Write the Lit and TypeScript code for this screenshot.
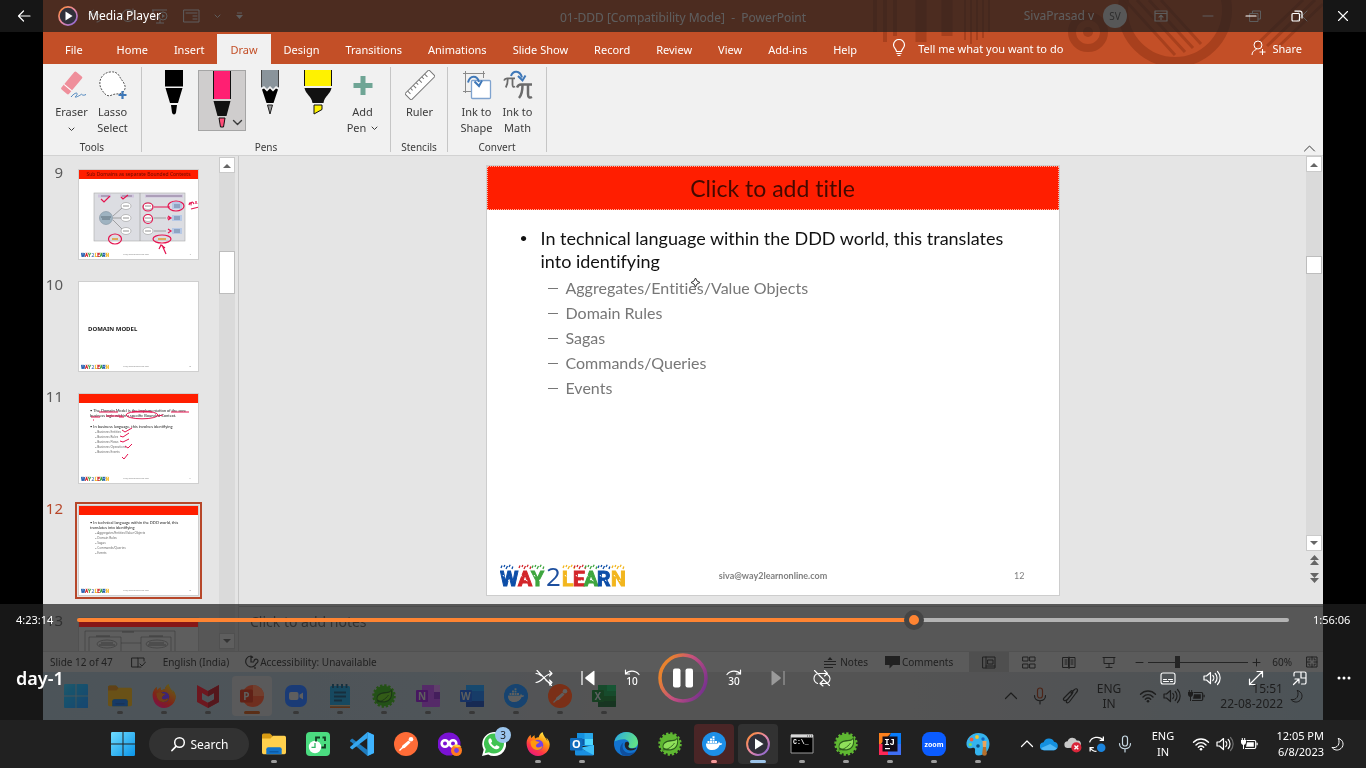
import { LitElement, html, svg, css, type TemplateResult } from "lit";
import { customElement, property, state } from "lit/decorators.js";
import { classMap } from "lit/directives/class-map.js";

type Shape = TemplateResult;

const icon = (w: number, h: number, box: string, body: Shape) =>
  html`<svg width=${w} height=${h} viewBox=${box} fill="none" aria-hidden="true">${body}</svg>`;

/* ---------- application logos, 24 x 24 ---------- */
const apps: Record<string, Shape> = {
  windows: svg`<defs><linearGradient id="win" x1="0" y1="0" x2="1" y2="1"><stop offset="0" stop-color="#6fdcff"/><stop offset="1" stop-color="#0a94e8"/></linearGradient></defs>
    <path fill="url(#win)" d="M0 1.2A1.2 1.2 0 0 1 1.2 0H11.5V11.5H0zM12.5 0H22.8A1.2 1.2 0 0 1 24 1.2V11.5H12.5zM0 12.5H11.5V24H1.2A1.2 1.2 0 0 1 0 22.8zM12.5 12.5H24V22.8A1.2 1.2 0 0 1 22.8 24H12.5z"/>`,
  folder: svg`<path fill="#d89b13" d="M0 3a1.6 1.6 0 0 1 1.6-1.6H8l2.4 2.4V9H0z"/><path fill="#ffd04d" d="M0 6.5h8.5l2.4-2.7h11.5A1.6 1.6 0 0 1 24 5.4v15.2a1.6 1.6 0 0 1-1.6 1.6H1.600A1.600 1.600 0 0 1 0 20.600z"/><path fill="#1273c9" d="M4.300 17.200a2 2 0 0 1 2-2h11.400a2 2 0 0 1 2 2v5H4.300z"/><path fill="#0b5aa5" d="M7.500 19h9v1.500h-9z"/>`,
  firefox: svg`<defs><linearGradient id="ff" x1=".8" y1="0" x2=".2" y2="1"><stop offset="0" stop-color="#fff44f"/><stop offset=".35" stop-color="#ff980e"/><stop offset=".7" stop-color="#ff3647"/><stop offset="1" stop-color="#e31587"/></linearGradient></defs>
    <path fill="url(#ff)" d="M23 9.500c-.6-1.600-1.800-3.200-2.800-3.700.8 1.500 1.200 2.800 1.300 3.600-1.500-3.700-4-5.200-5-9.400-2.700 1.500-3.500 4-3.700 5.200-1.300.1-2.500.5-3.500 1.200C8.500 5.500 8.400 4.200 8.800 3.200 7.300 3.800 6.200 5 5.500 6 4.900 5.500 4.600 3.700 4.700 2.700 3.500 3.500 1.500 6.200.9 8.500-.6 15 3.500 24 12 24c6.800 0 11.700-5.500 11.700-11.400 0-1.100-.3-2.300-.7-3.100z"/>
    <circle cx="12" cy="13" r="5.300" fill="#7542e5"/><path fill="#ff980e" d="M4.500 9.500c2-1.500 4.500-1.400 6-.3 1 .5 2.500.4 3 .6-.3 1.300-2 2-3 2.600-1.300 1-.2 3.300 2 3.200 2-.1 2.500-1.500 4-1.300-1 3-3.500 4-5.500 3.800-4-.3-6.500-3.500-6.500-8.600z"/>`,
  mcafee: svg`<path fill="#c8202f" d="M1 1l11 6L23 1v17l-11 6-11-6zM6 9v6.500l6 3.200 6-3.200V9l-6 3.500z" fill-rule="evenodd"/><path fill="#8f1420" d="M12 7l11-6v17l-11 6v-5.300l6-3.200V9l-6 3.500z"/>`,
  powerpoint: svg`<circle cx="13" cy="12" r="11" fill="#e8694a"/><path fill="#ff9a7a" d="M13 1a11 11 0 0 1 11 11H13z"/><rect y="5.500" width="13" height="13" rx="1.500" fill="#b83a1c"/><text x="3.300" y="15.600" font-family="Noto Sans" font-weight="700" font-size="10" fill="#fff">P</text>`,
  camera: svg`<rect x="1" y="1" width="22" height="22" rx="7" fill="#3b7cf0"/><rect x="5" y="8" width="9.500" height="8" rx="2" fill="#fff"/><path fill="#fff" d="M15.500 10.800L19 8.500v7l-3.500-2.300z"/>`,
  notepad: svg`<rect x="2" y="2" width="20" height="22" rx="1.500" fill="#2ba3cf"/><path stroke="#0b4a68" stroke-width="1.800" d="M5 0v4M9.500 0v4M14 0v4M18.500 0v4M6 8.500h12M6 12.500h12M6 16.500h8"/><path fill="#f2d9b8" d="M2 21h20v1.500H2z"/><path fill="#bd6b2c" d="M2 22.500h20V24H2z"/>`,
  spring: svg`<circle cx="12" cy="12" r="10.200" fill="#5fb832" stroke="#5fb832" stroke-width="3" stroke-dasharray="2.200 1.800"/><path fill="#2c5e1c" d="M5 17C3 10 9 8 14 8c3 0 4.500-1 5.500-3 2 8-1 13-7 13.500-3 .3-5 0-7.500-1.500z"/><path fill="#8fe05a" d="M5.500 15.500C5 11 10 9.500 14 9.300c2.500-.1 4-.8 5-2 .8 6-2 9.500-6.500 9.900-3 .2-4.500-.4-7-1.700z"/><path stroke="#2c5e1c" stroke-width=".9" d="M4.500 18c4 0 9-2.500 12-7"/>`,
  onenote: svg`<path fill="#b15bd6" d="M6 1h17a1 1 0 0 1 1 1v20a1 1 0 0 1-1 1H6z"/><path fill="#7a2fa8" d="M18 8h6v7h-6z"/><path fill="#e0a0f5" d="M18 1h5a1 1 0 0 1 1 1v6h-6z"/><rect y="6" width="12" height="12" rx="1" fill="#7719aa"/><text x="2" y="15.500" font-family="Noto Sans" font-weight="700" font-size="10" fill="#fff">N</text>`,
  word: svg`<path fill="#2b7cd3" d="M6 1h17a1 1 0 0 1 1 1v20a1 1 0 0 1-1 1H6z"/><path fill="#41a5ee" d="M6 1h17a1 1 0 0 1 1 1v5H6z"/><path fill="#103f91" d="M6 17h18v5a1 1 0 0 1-1 1H6z"/><rect y="6" width="12" height="12" rx="1" fill="#185abd"/><text x=".9" y="15.500" font-family="Noto Sans" font-weight="700" font-size="10" fill="#fff">W</text>`,
  excel: svg`<path fill="#21a366" d="M6 1h17a1 1 0 0 1 1 1v20a1 1 0 0 1-1 1H6z"/><path fill="#33c481" d="M15 1h8a1 1 0 0 1 1 1v5h-9z"/><path fill="#107c41" d="M6 12h18v5H6z"/><path fill="#185c37" d="M6 17h18v5a1 1 0 0 1-1 1H6z"/><rect y="6" width="12" height="12" rx="1" fill="#107c41"/><text x="2.500" y="15.500" font-family="Noto Sans" font-weight="700" font-size="10" fill="#fff">X</text>`,
  docker: svg`<circle cx="12" cy="12" r="12" fill="#1d8fe8"/><path fill="#fff" d="M4 11.500h11.500c1-.1 1.200-1 1-2 .8.300 1.300 1 1.400 1.800.8-.2 1.700-.1 2.300.4-.5 1-1.400 1.400-2.500 1.400-1.200 3.500-4 4.900-7.400 4.900-4 0-6.500-1.900-6.300-6.500z"/><path fill="#fff" d="M5.500 9h2v2h-2zM8 9h2v2H8zM10.500 9h2v2h-2zM13 9h2v2h-2zM8 6.500h2v2H8zM10.500 6.500h2v2h-2zM10.500 4.200h2v1.900h-2z"/>`,
  postman: svg`<circle cx="12" cy="12" r="12" fill="#ff6c37"/><path fill="#fff" d="M14.500 8.500l2 2-5.800 5.600-3 .5.500-2.800z"/><circle cx="17" cy="7.300" r="2.300" fill="#fff"/><path stroke="#fff" stroke-width="1.200" d="M5.500 18.500l4-4"/>`,
  clock: svg`<rect x="0" y="0" width="24" height="24" rx="4" fill="#4bdc80"/><circle cx="9" cy="15" r="6.200" fill="#fff"/><path stroke="#2fb765" stroke-width="1.300" d="M9 11v4.300H5.500"/><path stroke="#123b22" stroke-width="1.800" d="M10 9.500V5.500h4M16.500 5.500H19V9M19 12v3.500h-3.500"/>`,
  vscode: svg`<path fill="#2489ca" d="M17.500 0L24 3v18l-6.500 3z"/><path fill="#1f7bbd" d="M0 8.200l2.200-1.700L17.500 18v6L.3 9.200z"/><path fill="#35a7f0" d="M0 15.800l2.200 1.700L17.500 6V0L.3 14.800z"/><path fill="#3fb4ff" d="M17.500 0L24 3v18l-6.500 3z"/>`,
  infinity: svg`<circle cx="11" cy="12" r="11.500" fill="#7a12d4"/><circle cx="7" cy="11.500" r="3.300" stroke="#fff" stroke-width="2.600"/><circle cx="15" cy="11.500" r="3.300" stroke="#fff" stroke-width="2.600"/><circle cx="18.500" cy="18.500" r="5.500" fill="#ff7a1f"/><circle cx="18.500" cy="18.500" r="2.400" fill="#7542e5"/><path fill="#ffd23c" d="M15 14c2-2 6-2 8.500 1-1.500-.6-3-.3-4 .3z"/>`,
  whatsapp: svg`<path fill="#fff" d="M0 24l1.700-6.200A12 12 0 1 1 6.200 22.400z"/><path fill="#3fc351" d="M2.700 21.300l1.100-4A10 10 0 1 1 7 20.200z"/><path fill="#fff" d="M8.300 6.300c-.9 0-2 1.200-1.900 2.900.2 3.300 4.500 7.600 7.700 8 1.800.2 3.300-.9 3.400-2.200 0-.6-2.700-2-3.200-1.800-.5.200-1 1.300-1.500 1.200-1-.2-3.400-2.300-3.700-3.400-.1-.6 1-1 1-1.600 0-.5-1-3.100-1.800-3.100z"/>`,
  outlook: svg`<path fill="#1490df" d="M7 1h15a1 1 0 0 1 1 1v12H7z"/><path fill="#28a8ea" d="M14.500 1H22a1 1 0 0 1 1 1v5h-8.500z"/><path fill="#50d9ff" d="M14.500 7H23v6h-8.500z"/><path fill="#0f5ba8" d="M7 7h7.500v6H7z"/><path fill="#1a8fe0" d="M5 13l10 5.500L24 13v9a1.500 1.500 0 0 1-1.500 1.500h-16A1.500 1.500 0 0 1 5 22z"/><path fill="#3ec0f8" d="M24 13v9a1.500 1.500 0 0 1-.5 1L10 15.700z"/><rect y="6" width="12.500" height="12.500" rx="1.200" fill="#0f6cbd"/><text x="1.900" y="16" font-family="Noto Sans" font-weight="700" font-size="11" fill="#fff">O</text>`,
  edge: svg`<defs><linearGradient id="eg" x1="0" y1="0" x2="1" y2=".3"><stop offset="0" stop-color="#2aa9e0"/><stop offset="1" stop-color="#5fe08a"/></linearGradient></defs>
    <circle cx="12" cy="12" r="12" fill="#1273cf"/><path fill="url(#eg)" d="M.5 9.500C2 3.500 7 0 12.300 0 19 0 24 5 24 10.500c0 3.500-2.600 5.700-5.600 5.700-2.500 0-4.200-1-4.200-2 0-.8 1-1 1-2.700 0-2.500-2.700-4.300-5.700-4.300-3.500 0-6.700 1-9 2.300z"/><path fill="#0f4f9e" d="M9.500 10.500c-2.500 4.500 0 10.500 6.500 10.500 2.500 0 4.500-.8 6-2A12 12 0 0 1 12 24C5 23.500 4 14 9.500 10.500z"/><path fill="#232323" d="M14.300 14.200c0-.8 1-1.200.9-2.700-.6-2-2.700-2-4-1-1.500 3 .5 8 5.300 8 3 0 5-1.300 6-2.500-3 .7-8.200 1.200-8.200-1.800z"/>`,
  media: svg`<defs><linearGradient id="mp" x1="0" y1="0" x2="1" y2="1"><stop offset="0" stop-color="#ff8b2b"/><stop offset=".5" stop-color="#e98aa8"/><stop offset="1" stop-color="#7d62d8"/></linearGradient></defs>
    <circle cx="12" cy="12" r="10.900" fill="#30303a" stroke="url(#mp)" stroke-width="2"/><path fill="#fff" d="M9 6.500l8.500 5.500L9 17.500z"/>`,
  terminal: svg`<path fill="#000" stroke="#9b9b9b" d="M1 3h22v18H1z"/><path fill="#d8d8d8" d="M1 2.500h22v3H1z"/><path stroke="#444" d="M17 4h1M19 4h1M21 4h1"/><text x="3" y="12" font-family="Liberation Mono" font-weight="700" font-size="6.500" fill="#fff">C:\\_</text>`,
  intellij: svg`<path fill="#fc801d" d="M1 1h12L1 14z"/><path fill="#087cfa" d="M13 1h10v11H8z"/><path fill="#fe2857" d="M1 12h10v11H1z"/><path fill="#3f6ff5" d="M10 12h13v11H10z"/><path fill="#120c18" d="M4.500 4.500h15v15h-15z"/><text x="6.200" y="12.500" font-family="Liberation Mono" font-weight="700" font-size="9" fill="#fff">IJ</text><path fill="#fff" d="M7 16h5v1.200H7z"/>`,
  zoom: svg`<rect width="24" height="24" rx="7.500" fill="#0b5cff"/><text x="12" y="14.500" text-anchor="middle" font-family="Noto Sans" font-weight="700" font-size="7" fill="#fff">zoom</text>`,
  paint: svg`<path fill="#35b4ee" d="M12.500 1C5 1 0 7 .5 12.500c.3 3.500 3 4.500 5.500 3.500 2.500-1 3.500.5 3 3-.5 2.500.8 4.500 3.500 4.500 6 0 11-5 11-11.500S19 1 12.500 1z"/><circle cx="11" cy="5" r="1.900" fill="#f7c52b"/><circle cx="5.500" cy="7.500" r="1.900" fill="#f25a3c"/><circle cx="4.300" cy="12.500" r="1.600" fill="#7ed957"/><circle cx="17" cy="7" r="1.700" fill="#1565c0"/><circle cx="12" cy="14" r="1.800" fill="#0b4f82"/><path fill="#e9a35b" d="M16.500 9h4l-.4 6h-3.200z"/><path fill="#b5702d" d="M17 15h3l.8 6.500a2.300 2.300 0 0 1-4.600 0z"/>`,
};
const app = (name: string) => icon(24, 24, "0 0 24 24", apps[name]);

/* ---------- line glyphs ---------- */
const line = (d: string, w = 16, h = 16, sw = 1) =>
  icon(w, h, `0 0 ${w} ${h}`, svg`<path d=${d} stroke="currentColor" stroke-width=${sw} stroke-linecap="round" stroke-linejoin="round"/>`);

const moon = () => line("M8.500 1.500c5 1 6 7 2.500 10-3 2.500-7 1.800-9-1 5.500 1 8.500-3.500 6.500-9z", 14, 14);
const chevronUp = () => line("M1.500 8.500L7 3l5.500 5.500", 14, 12, 1.2);
const chevronDown = () => line("M1 1l2.500 2.500L6 1", 7, 5);
const mic = (a = "currentColor") =>
  icon(14, 18, "0 0 14 18", svg`<rect x="4.500" y="1" width="5" height="10" rx="2.500" stroke=${a} stroke-width="1.200"/><path d="M1.500 8.500c0 7 11 7 11 0M7 14v3" stroke="currentColor" stroke-width="1.200" stroke-linecap="round"/>`);
const speaker = (dimLast: boolean) =>
  icon(18, 16, "0 0 18 16", svg`<path d="M1 6v4h2.500L7.500 13.500v-11L3.500 6z" stroke="currentColor" stroke-width="1.200" stroke-linejoin="round"/><path d="M9.800 5.500c1.300 1.300 1.300 3.700 0 5M12.200 3.500c2.400 2.400 2.400 6.600 0 9" stroke="currentColor" stroke-width="1.200" stroke-linecap="round"/><path d="M14.500 1.500c3.500 3.500 3.500 9.500 0 13" stroke="currentColor" stroke-opacity=${dimLast ? 0.35 : 1} stroke-width="1.200" stroke-linecap="round"/>`);
const wifi = () =>
  icon(18, 14, "0 0 18 14", svg`<path d="M1.500 5.200c4.300-4.300 10.700-4.300 15 0M4 7.900c3-2.900 7-2.900 10 0M6.300 10.300c1.600-1.500 3.800-1.500 5.400 0" stroke="currentColor" stroke-width="1.400" stroke-linecap="round"/><circle cx="9" cy="12.300" r="1.300" fill="currentColor"/>`);
const battery = () =>
  icon(18, 14, "0 0 18 14", svg`<path d="M6.500 3.500h8a1.200 1.200 0 0 1 1.200 1.200v5.600a1.200 1.200 0 0 1-1.200 1.200H5" stroke="currentColor" stroke-width="1.200"/><path d="M7 5.300h6.800v4.400H6zM16.500 5.700h1.200v2.600h-1.200zM1 3h5v2.500a2.500 2.500 0 0 1-2 2.400V12H3V7.900a2.500 2.500 0 0 1-2-2.400z" fill="currentColor"/><path d="M2.300 1v2M4.700 1v2" stroke="currentColor"/>`);

/* ---------- ribbon drawings ---------- */
const eraser = () => icon(30, 30, "0 0 30 30", svg`<g transform="rotate(-50 14 13)"><rect x="3" y="8.500" width="23" height="10" rx="1.500" fill="#ef8f9b"/><path d="M8.500 8.500v10" stroke="#fff" stroke-width="1"/></g><path d="M14 27c5-6 8-4 5-1s4-.5 5-1.500 1 2 5 0" stroke="#4a83bd" stroke-width="1"/>`);
const lasso = () => icon(30, 30, "0 0 30 30", svg`<path d="M4 20C-1 13 3 3 12 2c8-1 9 4 11 7 4 5 6 9 2 13-3 3-7 1-11 3-4 2-7 0-10-5z" fill="#fff" stroke="#555" stroke-dasharray="2 1.200"/><path d="M24.500 21v8M20.500 25h8" stroke="#3f78b8" stroke-width="2.200"/>`);
const plusBig = () => icon(30, 30, "0 0 30 30", svg`<path d="M15 6v19M5.500 15.500h19" stroke="#6fa595" stroke-width="5"/>`);
const ruler = () => icon(30, 30, "0 0 30 30", svg`<g transform="rotate(-45 15 15)"><rect x="-2" y="10.500" width="34" height="9" fill="#fff" stroke="#777"/><path d="M2 10.500v4M6 10.500v3M10 10.500v4M14 10.500v3M18 10.500v4M22 10.500v3M26 10.500v4" stroke="#777"/></g>`);
const inkShape = () => icon(30, 30, "0 0 30 30", svg`<path d="M1 3.500h22M3.500 1v22M21.500 1v7M1 21.500h8" stroke="#8a8a8a"/><rect x="9.500" y="10.500" width="19" height="18" rx="1" fill="#fff" stroke="#7fa3cf" stroke-width="1.300"/><path d="M6 12.500C8 5 15 5 17 12M12.500 11.500l4.500 4.500 3-5.500" stroke="#3f78b8" stroke-width="2"/>`);
const inkMath = () => icon(30, 30, "0 0 30 30", svg`<path d="M1 10.500c.8-2 1.500-2.200 3-2.200h8M4.800 8.500c0 4-.5 6.500-2 9M9.500 8.500v6c0 2.300 1 2.800 2.500 2" stroke="#6b6b6b" stroke-width="1.800"/><path d="M14 17.500c1-2.500 2-3 4-3h11M19.500 15c0 6-.8 10-3.500 13M25 15v9c0 3.500 1.500 4.300 4 3" stroke="#6b6b6b" stroke-width="2.500"/><path d="M8 6c2-6 9-6 11 1.500M15 6l4.500 4.500 3-5" stroke="#3f78b8" stroke-width="2"/>`);

const penDrawings: Shape[] = [
  svg`<path fill="#000" d="M6 0h18v16H6zM6.500 18h17l-4.500 15h-8zM12 35h6l-1 7.500q-.5 2-2 2t-2-2z"/><path fill="#777" d="M6 16h18v1H6z"/>`,
  svg`<path fill="#ff1f72" d="M6 0h18v28H6z"/><path fill="#111" d="M6 0h1v28H6zM23 0h1v28h-1zM6.500 30h17l-4 15h-9z"/><path fill="#ff4d78" stroke="#111" stroke-width="1" d="M12 47h6l-1.500 9h-3z"/>`,
  svg`<path fill="#8a949b" d="M6 0h18v18l-3-2-3 3-3-3-3 3-3-3-3 2z"/><path fill="#444" d="M6 0h1v17H6zM23 0h1v17h-1z"/><path fill="#000" d="M7 19.500l2-1 3 3 3-3 3 3 3-3 2 1L18.500 33h-7z"/><path fill="#999" stroke="#222" stroke-width="1" d="M12.500 35h5L15 44z"/>`,
  svg`<path fill="#fff200" d="M1 0h28v16H1z"/><path fill="#111" d="M1 0h1v16H1zM28 0h1v16h-1zM1.500 18h27c-1 6-7 8-8 15h-11c-1-7-7-9-8-15z"/><path fill="#fff200" stroke="#111" stroke-width="1" d="M11 35h8v4.500L11 44z"/>`,
];

/* ---------- slide logo ---------- */
const logoLetters: Array<[string, number, string]> = [
  ["W", 0, "#0d4ea8"], ["A", 18, "#d3262b"], ["Y", 31, "#3fa63f"], ["L", 62, "#f2b61e"],
  ["E", 73, "#d3262b"], ["A", 84, "#3fa63f"], ["R", 97, "#0d4ea8"], ["N", 111, "#f2b61e"],
];
const slideLogo = () => html`<svg class="logo" viewBox="0 0 126 36" role="img" aria-label="WAY2LEARN">
  ${logoLetters.map(([ch, x, color]) => svg`<text x=${x} y="28" font-family="Roboto, sans-serif" font-weight="700" font-size="21" fill=${color} stroke=${color} stroke-width="1">${ch}</text>
    <path d=${`M${x + 1} 10l1-2.500M${x + 4} 9l.8-2M${x + 6} 11l1.500-3M${x + 9} 9l1.200-2.200M${x + 12} 11l.8-2.500`} stroke=${color} stroke-width="1.300" />
    <path d=${`M${x + 3} 17l1 1.500M${x + 8} 22l1.500 1`} stroke="#fff" stroke-width="1" />`)}
  <text x="46" y="28" font-family="Open Sans, sans-serif" font-weight="400" font-size="26" fill="#1d4f9e">2</text>
</svg>`;

const base = css`
  :host { box-sizing: border-box; font-family: "Noto Sans", "Open Sans", sans-serif; }
  *, *::before, *::after { box-sizing: border-box; }
  button { font: inherit; color: inherit; background: none; border: 0; padding: 0; margin: 0; }
  svg { display: block; flex: none; }
  ul { list-style: none; margin: 0; padding: 0; }
  p, h1, h2 { margin: 0; font-weight: 400; }
`;

interface Slide { no: number; kind: string; title?: string; points?: string[]; subs?: string[]; }

const current: Slide = {
  no: 12, kind: "bullets",
  points: ["In technical language within the DDD world, this translates into identifying"],
  subs: ["Aggregates/Entities/Value Objects", "Domain Rules", "Sagas", "Commands/Queries", "Events"],
};
const deck: Slide[] = [
  { no: 9, kind: "diagram", title: "Sub Domains as separate Bounded Contexts" },
  { no: 10, kind: "section", title: "DOMAIN MODEL" },
  {
    no: 11, kind: "bullets",
    points: ["The Domain Model is the implementation of the core business logic within a specific Bounded Context.", "In business language, this involves identifying"],
    subs: ["Business Entities", "Business Rules", "Business Flows", "Business Operations", "Business Events"],
  },
  current,
  { no: 13, kind: "blocks", title: "" },
];

@customElement("slide-thumb")
class SlideThumb extends LitElement {
  @property({ attribute: false }) slide!: Slide;
  @property({ type: Boolean }) active = false;

  static styles = [base, css`
    :host { display: grid; grid-template-columns: 20px 121px; column-gap: 15px; }
    .no { font-size: 15px; line-height: 15px; text-align: right; color: #5a5a5a; margin-top: -4px; }
    .no.active { color: #b7472a; }
    .page { position: relative; height: 91px; background: #fff; border: 1px solid #cfcfcf; overflow: hidden; display: flex; flex-direction: column; font-size: 3px; line-height: 5px; color: #222; }
    .frame.active { outline: 2px solid #b7472a; outline-offset: 1px; }
    .band { height: 9px; background: #ff1e00; text-align: center; font-size: 5px; line-height: 9px; color: #6b0b00; }
    .body { flex: 1; padding: 5px 6px 0 11px; }
    .body p { margin-bottom: 6px; font-family: "Lato", "Noto Sans", sans-serif; font-size: 4px; }
    .body p:last-of-type { margin-bottom: 1px; }
    .body li { color: #666; padding-left: 5px; }
    .section { flex: 1; padding: 44px 0 0 9px; font-weight: 700; font-size: 6px; line-height: 6px; color: #222; }
    .foot { display: grid; grid-template-columns: 1fr auto 1fr; align-items: center; padding: 0 7px 0 2px; font-size: 2px; line-height: 4px; color: #888; }
    .foot span:last-child { text-align: right; }
    .logo { width: 28px; height: 8px; }
    .over { position: absolute; inset: 0; }
  `];

  private diagram() {
    const node = (x: number, y: number) => svg`<ellipse cx=${x} cy=${y} rx="5" ry="3.500" fill="#fff" stroke="#999" stroke-width=".6"/><path d=${`M${x - 3} ${y}h6`} stroke="#777" stroke-width=".8"/>`;
    return html`<svg class="over" width="121" height="91" viewBox="0 0 121 91" fill="none">
      <rect x="15" y="23" width="91" height="48" fill="#dcdde2" stroke="#aaa" stroke-width=".6"/><path d="M61 23v48" stroke="#999" stroke-width=".6"/>
      <path d="M19 26h13M41 26h14M66 26h38" stroke="#cfc3dd" stroke-width="3"/><path d="M22 26h8M43 26h10M67 26h36" stroke="#8a7a95" stroke-width="1"/>
      <circle cx="27" cy="48" r="6.500" fill="#9fb3c1" stroke="#7d919e" stroke-width=".6"/><path d="M22 47h10M23 49h8" stroke="#4f5d68" stroke-width=".8"/>
      <path d="M34 46l9-8M34 48h9M34 50l9 9M75 48h12M75 61h12" stroke="#777" stroke-width=".6"/>
      ${node(47, 36)}${node(47, 48)}${node(47, 61)}${node(69, 36)}${node(69, 48)}${node(69, 61)}
      <path fill="#b7c9e6" d="M93 32h10v7H93zM93 45h10v6H93zM93 58h10v6H93z"/><path stroke="#66809f" stroke-width="1" d="M95 35h6M95 37h6M95 47h6M95 49h6M95 60h6M95 62h6"/>
      <g stroke="#e5134f" stroke-width="1.200"><path d="M22 29l3 3 6-6M42 27l2 2 5-4M75 37h16M91 48h-3M89 46l3 2-3 2M89 59l3 2-3 2"/><ellipse cx="69" cy="37" rx="5" ry="4"/><ellipse cx="69" cy="49" rx="4.500" ry="4.500"/><ellipse cx="97" cy="36" rx="8" ry="5"/><ellipse cx="36" cy="69" rx="6.500" ry="5"/><ellipse cx="83" cy="69" rx="9" ry="4"/><path d="M87 84l-4-9M80 79l2-4 4 3M110 35q1-4 2-1q1-4 3 0M117 31v3M119 34q2-3 2-2M112 39l8-2"/></g>
      <path d="M33 69h6M79 69h8" stroke="#e0982f" stroke-width="1.500"/>
    </svg>`;
  }

  private marks() {
    return html`<svg class="over" width="121" height="91" viewBox="0 0 121 91" fill="none"><g stroke="#e5134f" stroke-width="1">
      <path d="M20 18h19M53 18h20M92 18h18M12 23h9M27 22h16M40 23h5M14 26h1"/><ellipse cx="63" cy="21" rx="16" ry="3.800"/><path d="M79 22l5-1M43 36l3 2 7-4M41 42l3 1 6-4M41 47l3 1 6-3M46 52l3 2 4-4M43 63l2 2 4-5"/></g></svg>`;
  }

  private blocks() {
    return html`<svg class="over" width="121" height="91" viewBox="0 0 121 91" fill="none" stroke="#888" stroke-width=".7"><path d="M6 13h90v50H6zM10 19h32v20H10zM62 19h30v20H62zM42 25h20" /><ellipse cx="28" cy="26" rx="10" ry="4"/><ellipse cx="78" cy="26" rx="11" ry="4"/><path d="M22 25h12M20 27h16M70 25h15M69 27h18M43 14h12M17 18h14M70 18h14" stroke="#555"/></svg>`;
  }

  render() {
    const s = this.slide;
    return html`
      <div class=${classMap({ no: true, active: this.active })}>${s.no}</div>
      <div class=${classMap({ frame: true, active: this.active })}>
        <div class="page">
          ${s.kind === "section"
            ? html`<div class="section">${s.title}</div>`
            : html`<div class="band">${s.title}</div>
                <div class="body">
                  ${s.points?.map((p) => html`<p>• ${p}</p>`)}
                  <ul>${s.subs?.map((t) => html`<li>– ${t}</li>`)}</ul>
                </div>`}
          ${s.kind === "diagram" ? this.diagram() : s.no === 11 ? this.marks() : s.kind === "blocks" ? this.blocks() : ""}
          ${s.kind === "blocks" ? "" : html`<div class="foot">${slideLogo()}<span>siva@way2learnonline.com</span><span>${s.no}</span></div>`}
        </div>
      </div>`;
  }
}

const tabs = ["File", "Home", "Insert", "Draw", "Design", "Transitions", "Animations", "Slide Show", "Record", "Review", "View", "Add-ins", "Help"];

@customElement("deck-editor")
class DeckEditor extends LitElement {
  @state() private tab = "Draw";

  static styles = [base, css`
    :host { display: flex; flex-direction: column; flex: 1; min-width: 0; background: #e5e5e5; color: #3b3b3b; overflow: hidden; }
    .head { position: relative; background: #c34f27; color: #fff; }
    .pattern { position: absolute; right: 0; top: 0; }
    .titlebar { position: relative; display: grid; grid-template-columns: 1fr auto 1fr; align-items: center; height: 32px; font-size: 12px; line-height: 16px; }
    .quick { display: flex; align-items: center; gap: 14px; padding-left: 44px; }
    .caption { padding-top: 4px; white-space: pre; }
    .account { display: flex; align-items: center; justify-content: flex-end; gap: 9px; padding-right: 14px; }
    .avatar { width: 24px; height: 24px; border-radius: 50%; background: #e8e8e8; color: #555; font-size: 10px; line-height: 24px; text-align: center; }
    .caps { display: flex; align-items: center; gap: 33px; margin-left: 18px; }
    .tabs { position: relative; display: flex; height: 32px; padding-left: 9px; font-size: 11px; line-height: 31px; }
    .tab { padding: 0 13px; height: 30px; margin-top: 2px; white-space: nowrap; }
    .tab:first-of-type { padding: 0 21px 0 13px; }
    .tab.on { background: #f1f1f1; color: #c34f27; }
    .tell { display: flex; align-items: center; gap: 12px; margin-left: 22px; font-size: 11px; }
    .share { display: flex; align-items: center; gap: 6px; margin-left: auto; padding-right: 21px; }
    .ribbon { display: flex; height: 91px; background: #f1f1f1; font-size: 11px; line-height: 16px; padding-top: 3px; }
    .group { display: flex; flex-direction: column; height: 85px; border-right: 1px solid #c6c6c6; padding-top: 3px; }
    .row { display: flex; flex: 1; padding: 0 8px; }
    .row.slim { padding-right: 7px; }
    .name { text-align: center; font-size: 10px; line-height: 10px; }
    .cmd { display: flex; flex-direction: column; align-items: center; gap: 4px; min-width: 41px; height: 65px; text-align: center; white-space: nowrap; }
    .word { display: inline-flex; align-items: center; gap: 5px; height: 16px; }
    .pen { width: 48px; height: 61px; display: flex; justify-content: center; position: relative; }
    .pen.on { background: #cfcdcd; border: 1px solid #a5a5a5; }
    .pen .more { position: absolute; right: 2px; bottom: 4px; }
    .collapse { margin: auto 7px 0 auto; padding-bottom: 2px; }
    .work { display: flex; flex: 1; min-height: 0; border-top: 1px solid #d2d2d2; overflow: hidden; }
    .strip { display: flex; width: 196px; border-right: 1px solid #c8c8c8; }
    .list { flex: 1; display: flex; flex-direction: column; gap: 21px; padding-top: 13px; height: 0; }
    .bar { display: flex; flex-direction: column; width: 16px; background: #dadada; margin: 1px 3px 0 0; flex: none; }
    .bar.main { margin: 0 1px 0 0; }
    .arrow { width: 16px; height: 16px; background: #fff; border: 1px solid #cacaca; display: grid; place-items: center; }
    .knob { width: 16px; background: #fff; border: 1px solid #bdbdbd; }
    .strip .knob { height: 43px; margin: 78px 0 auto; }
    .strip .bar { padding-bottom: 2px; }
    .main .knob { height: 18px; margin: 84px 0 auto; }
    .jump { background: #e5e5e5; display: flex; flex-direction: column; align-items: center; gap: 8px; padding: 4px 0 23px; }
    .center { flex: 1; display: flex; flex-direction: column; min-width: 0; }
    .stage { flex: 1; display: flex; }
    .canvas { flex: 1; display: flex; justify-content: center; align-items: flex-start; padding-top: 9px; }
    .slide { position: relative; width: 574px; height: 431px; background: #fff; border: 1px solid #cdcdcd; display: flex; flex-direction: column; font-family: "Lato", "Noto Sans", sans-serif; font-variant-ligatures: none; }
    .title { height: 44px; background: #ff1e00; border: 1px dotted #ffb3a6; color: #430a00; font-size: 23px; line-height: 42px; text-align: center; }
    .points { padding: 17px 50px 0 54px; font-size: 18px; line-height: 23px; color: #111; }
    .point { position: relative; }
    .point::before { content: "•"; position: absolute; left: -21px; top: -1px; font-size: 14px; }
    .subs { padding: 2px 0 0 61px; font-size: 16px; line-height: 25px; color: #777; }
    .subs li { display: flex; align-items: center; gap: 8px; }
    .subs li::before { content: ""; width: 10px; height: 1px; margin-top: 2px; background: #777; }
    .cursor { position: absolute; left: 203px; top: 111px; }
    .foot { margin-top: auto; display: grid; grid-template-columns: 1fr auto 1fr; align-items: center; padding: 0 12px 1px 13px; font-size: 9px; line-height: 12px; font-weight: 700; color: #808080; }
    .foot .page { text-align: right; padding-right: 22px; font-weight: 400; }
    .logo { width: 126px; height: 36px; }
    .notes { height: 45px; border-top: 1px solid #bcbcbc; padding: 6px 11px; font-size: 14px; line-height: 18px; color: #5a5a5a; }
    .status { display: flex; align-items: center; height: 21px; background: #f1f1f1; border-top: 1px solid #cfcfcf; font-size: 10px; line-height: 14px; color: #222; padding: 0 5px 0 7px; }
    .status > * { flex: none; }
    .status .lang { margin: 0 16px 0 17px; }
    .status .book { margin-left: 18px; }
    .status .notesbtn { display: flex; align-items: center; gap: 4px; margin-left: auto; }
    .status .comments { display: flex; align-items: center; gap: 2px; margin: 0 16px 0 17px; }
    .view { width: 40px; height: 20px; display: grid; place-items: center; }
    .view.on { background: #c9c9c9; }
    .view.last { margin-right: 6px; }
    .zoomer { appearance: none; width: 100px; height: 12px; margin: 0 4px; background: linear-gradient(#333, #333) center / 100% 1px no-repeat; }
    .zoomer::-webkit-slider-thumb { appearance: none; width: 5px; height: 12px; background: #333; }
    .pct { margin: 0 14px 0 11px; }
    .dock { display: flex; align-items: center; height: 48px; padding-left: 13px; background: linear-gradient(90deg, #c9d9e2, #d0dce3 30%, #dcdcdc 44%, #dadada 68%, #c6d3dc); color: #151515; }
    .pin { position: relative; width: 40px; height: 40px; margin-right: 4px; display: grid; place-items: center; border-radius: 4px; }
    .pin.on { background: #efeff0; }
    .pin.run::after { content: ""; position: absolute; left: 17px; bottom: 2px; width: 6px; height: 3px; border-radius: 2px; background: #777; }
    .pin.on::after { left: 12px; width: 16px; background: #b5602c; }
    .tray { display: flex; align-items: center; margin-left: auto; gap: 6px; padding-right: 20px; font-size: 12px; line-height: 15px; text-align: center; }
    .tray .apart { margin-left: 9px; }
    .tray .time { text-align: right; width: 72px; }
    .tray .lang { width: 36px; margin: 0 6px 0 5px; }
  `];

  private dockItem(name: string, i: number) {
    return html`<button class=${classMap({ pin: true, run: i > 0, on: name === "powerpoint" })} aria-label=${name}>${app(name)}</button>`;
  }

  private cmd(pic: unknown, a: string, b: unknown) {
    return html`<button class="cmd">${pic}<span>${a}<br /><span class="word">${b}</span></span></button>`;
  }

  render() {
    const tri = (d: string) => icon(8, 5, "0 0 8 5", svg`<path d=${d} fill="#666"/>`);
    const up = "M0 5l4-4 4 4z", down = "M0 0l4 4 4-4z";
    const jumper = (d: string) => icon(9, 10, "0 0 9 10", svg`<path d=${d} fill="#666"/>`);
    return html`
      <div class="head">
        <svg class="pattern" width="460" height="64" viewBox="0 0 460 64" fill="none" stroke="#a8401d" aria-hidden="true">
          <path d="M12 0v32M22 0v42M32 0v36" stroke-width="4"/><path d="M58 0v42M84 0v36" stroke-width="11"/><path d="M102 0v40M108 0v44M114 0v40M120 0v38M126 0v32" stroke-width="2"/>
          <circle cx="225" cy="32" r="16" stroke-width="8"/><circle cx="225" cy="32" r="5" fill="#a8401d" stroke="none"/>
          <circle cx="312" cy="10" r="52" stroke-width="10"/>
          <path d="M262 0l50 55M274 0l48 52M286 0l44 48M298 0l40 44M392 46L440 0M404 46L452 0M416 46l44-42" stroke-width="3"/>
        </svg>
        <div class="titlebar">
          <div class="quick">
            ${line("M2 6h8a4 4 0 0 1 0 8M2 6l4-4M2 6l4 4", 18, 16)}${line("M14 4a6 6 0 1 0 1 5M14 1v4h-4", 18, 16)}
            ${icon(18, 16, "0 0 18 16", svg`<path d="M1 2h15M2 2v8h6M9 15v-3M5 15h8" stroke="currentColor"/><circle cx="12" cy="8" r="4" stroke="currentColor"/><path d="M11 6l3 2-3 2z" fill="currentColor"/>`)}
            ${line("M1 1h15v12H1zM3 4h11M10 7h4M10 10h4", 17, 14)}${chevronDown()}${icon(9, 8, "0 0 9 8", svg`<path d="M2 1h5" stroke="currentColor"/><path d="M1 3h7L4.500 7z" fill="currentColor"/>`)}
          </div>
          <div class="caption">01-DDD [Compatibility Mode]  -  PowerPoint</div>
          <div class="account">
            <span>SivaPrasad v</span><span class="avatar">SV</span>
            <span class="caps">
              ${line("M1 1h12v10H1zM1 3.500h12M7 9.500V5.500M5 7.200l2-2 2 2", 14, 12, 1.2)}
              ${line("M2 7h10", 14, 14)}${line("M2 4.500h8v8H2zM4.500 4.500V2h8v8h-2.500", 14, 14)}${line("M2 2l10 10M12 2L2 12", 14, 14)}
            </span>
          </div>
        </div>
        <nav class="tabs">
          ${tabs.map((t) => html`<button class=${classMap({ tab: true, on: t === this.tab })} @click=${() => (this.tab = t)}>${t}</button>`)}
          <button class="tell">${icon(14, 18, "0 0 14 18", svg`<path d="M4.500 12.500C4.500 10 1.500 9 1.500 6a5.500 5.500 0 0 1 11 0c0 3-3 4-3 6.500zM4.500 14.500h5M5.500 16.500h3" stroke="currentColor" stroke-width="1.200"/>`)}Tell me what you want to do</button>
          <button class="share">${icon(15, 16, "0 0 15 16", svg`<circle cx="7" cy="5" r="4" stroke="currentColor"/><path d="M1 15c0-3 2-5 4.500-5.500M8.500 12h6M11.500 9v6" stroke="currentColor"/>`)}Share</button>
        </nav>
      </div>
      <div class="ribbon">
        <div class="group"><div class="row">${this.cmd(eraser(), "Eraser", chevronDown())}${this.cmd(lasso(), "Lasso", "Select")}</div><div class="name">Tools</div></div>
        <div class="group"><div class="row slim">
          ${penDrawings.map((p, i) => html`<button class=${classMap({ pen: true, on: i === 1 })} aria-label="Pen ${i + 1}">${icon(30, 58, "0 0 30 58", p)}${i === 1 ? html`<span class="more">${line("M1.500 1.500l4 4 4-4", 11, 7, 1.4)}</span>` : ""}</button>`)}
          ${this.cmd(plusBig(), "Add", html`Pen ${chevronDown()}`)}
        </div><div class="name">Pens</div></div>
        <div class="group"><div class="row slim">${this.cmd(ruler(), "Ruler", "")}</div><div class="name">Stencils</div></div>
        <div class="group"><div class="row">${this.cmd(inkShape(), "Ink to", "Shape")}${this.cmd(inkMath(), "Ink to", "Math")}</div><div class="name">Convert</div></div>
        <button class="collapse" aria-label="Collapse ribbon">${line("M1.500 7l5-5 5 5", 13, 9)}</button>
      </div>
      <div class="work">
        <div class="strip">
          <div class="list">${deck.map((s) => html`<slide-thumb .slide=${s} ?active=${s.no === 12}></slide-thumb>`)}</div>
          <div class="bar"><span class="arrow">${tri(up)}</span><span class="knob"></span><span class="arrow">${tri(down)}</span></div>
        </div>
        <div class="center">
          <div class="stage">
            <div class="canvas">
              <article class="slide">
                <h1 class="title">Click to add title</h1>
                <ul class="points">${current.points!.map((p) => html`<li class="point">${p}</li>`)}</ul>
                <ul class="subs">${current.subs!.map((t) => html`<li>${t}</li>`)}</ul>
                <svg class="cursor" width="11" height="11" viewBox="0 0 11 11" fill="none"><path d="M5.500 1L7 4l3 1.500L7 7l-1.500 3L4 7 1 5.500 4 4z" stroke="#333"/></svg>
                <div class="foot">${slideLogo()}<span>siva@way2learnonline.com</span><span class="page">12</span></div>
              </article>
            </div>
            <div class="bar main">
              <span class="arrow">${tri(up)}</span><span class="knob"></span><span class="arrow">${tri(down)}</span>
              <span class="jump">${jumper("M0 5l4.500-5L9 5zM0 10l4.500-5L9 10z")}${jumper("M0 0h9L4.500 5zM0 5h9L4.500 10z")}</span>
            </div>
          </div>
          <p class="notes">Click to add notes</p>
        </div>
      </div>
      <div class="status">
        <span>Slide 12 of 47</span>
        <span class="book">${line("M1 2h6v9H1zM7 2h6v3M7 11h3M9 8l2 2 3.500-4", 15, 13)}</span>
        <span class="lang">English (India)</span>
        ${icon(14, 14, "0 0 14 14", svg`<path d="M6 1a5.500 5.500 0 1 0 4 9.500M6 1v6h3M6 1l2 1.500M9 6.500c0-3 4-3 4-.5s-3 2-3 5" stroke="currentColor" stroke-width="1.200"/><circle cx="10" cy="13" r=".9" fill="currentColor"/>`)}
        <span>&hairsp;Accessibility: Unavailable</span>
        <button class="notesbtn">${icon(12, 12, "0 0 12 12", svg`<path d="M0 5.500h12M0 8.500h12M0 11.500h9" stroke="currentColor"/><path d="M3.500 4L6 1l2.500 3z" fill="currentColor"/>`)}Notes</button>
        <button class="comments">${icon(15, 14, "0 0 15 14", svg`<path d="M0 1h15v9H8l-3.500 3.500V10H0z" fill="currentColor"/>`)}Comments</button>
        <button class="view on" aria-label="Normal view">${line("M1 1h12v11H1zM4 1v11M6 4h5v4H6zM4 10h9", 14, 13)}</button>
        <button class="view" aria-label="Slide sorter">${line("M1 1h5v4H1zM8 1h5v4H8zM1 8h5v4H1zM8 8h5v4H8z", 14, 13)}</button>
        <button class="view" aria-label="Reading view">${line("M1 1.500h5.500v10H1zM7.500 1.500H13v10H7.500zM7 1v12M3 4h2M3 6h2M3 8h2M9 4h2M9 6h2M9 8h2", 14, 13)}</button>
        <button class="view last" aria-label="Slide show">${line("M1 1.500h12M2 1.500v6h10v-6M7 7.500v4M4 11.500h6", 14, 13)}</button>
        ${line("M1 4.500h7", 9, 9)}
        <input class="zoomer" type="range" aria-label="Zoom" min="10" max="190" value="60" />
        ${line("M1 4.500h7M4.500 1v7", 9, 9)}
        <span class="pct">60%</span>
        ${line("M1 1h10v10H1zM3 4V3h1M8 3h1v1M9 8v1H8M4 9H3V8M6 1v3M6 8v3M1 6h3M8 6h3", 12, 12)}
      </div>
      <div class="dock">
        ${["windows", "folder", "firefox", "mcafee", "powerpoint", "camera", "notepad", "spring", "onenote", "word", "docker", "postman", "excel"].map((n, i) => this.dockItem(n, i))}
        <div class="tray">
          ${chevronUp()}<span class="apart">${mic("#8a3a20")}</span>
          <span class="apart">${line("M6 12c-3 3-6 1-4-1l6-6c2-3 4 0 2 2l-5 6c-2 3 1 4 3 1l6-8c3-3 1-6-2-3l-3 3", 18, 18, 1.2)}</span>
          <span class="lang">ENG<br />IN</span>${wifi()}${speaker(false)}${battery()}
          <span class="time">15:51<br />22-08-2022</span>${moon()}
        </div>
      </div>`;
  }
}

@customElement("app-root")
class AppRoot extends LitElement {
  @state() private elapsed = 15794;
  private readonly total = 22760;

  static styles = [base, css`
    :host { display: flex; flex-direction: column; min-height: 100vh; background: #000; color: #fff; }
    .player { position: relative; flex: 1; display: flex; padding: 0 43px; }
    .top { position: absolute; inset: 0 0 auto 0; height: 32px; display: flex; align-items: center; background: rgba(31, 31, 31, 0.72); font-size: 12px; line-height: 16px; }
    .back { width: 48px; display: grid; place-items: center; }
    .brand { margin: 0 10px; }
    .caps { margin-left: auto; display: flex; }
    .caps button { width: 46px; height: 32px; display: grid; place-items: center; }
    .panel { position: absolute; inset: auto 0 0 0; background: rgba(255, 255, 255, 0.09); backdrop-filter: brightness(0.31) saturate(1.8); }
    .seekrow { display: flex; align-items: center; height: 32px; padding: 0 16px; font-size: 11px; line-height: 16px; }
    .stamp { width: 37px; white-space: nowrap; }
    .seek { flex: 1; min-width: 0; appearance: none; height: 20px; margin: 0 24px; background: transparent; }
    .seek::-webkit-slider-runnable-track { height: 4px; border-radius: 2px; background: linear-gradient(90deg, #ff8432 var(--at), #b4b4b4 var(--at)); }
    .seek::-webkit-slider-thumb { appearance: none; width: 20px; height: 20px; margin-top: -8px; border-radius: 50%; background: #ff8432; border: 5px solid #454545; }
    .controls { display: grid; grid-template-columns: 1fr auto 1fr; align-items: center; height: 84px; }
    .name { padding-left: 16px; font-size: 18px; line-height: 24px; font-weight: 600; }
    .mid, .side { display: flex; align-items: center; gap: 4px; }
    .side { justify-content: flex-end; padding-right: 2px; }
    .ctl { width: 40px; height: 40px; display: grid; place-items: center; }
    .ctl.play { width: 54px; height: 54px; }
    .ctl.off { color: #9a9a9a; }
    .taskbar { display: flex; align-items: center; height: 48px; padding: 0 22px 0 103px; background: #212121; }
    .pin { position: relative; width: 40px; height: 40px; margin-right: 4px; display: grid; place-items: center; border-radius: 4px; flex: none; }
    .run::after { content: ""; position: absolute; left: 17px; bottom: 1px; width: 6px; height: 3px; border-radius: 2px; background: #9d9d9d; }
    .alert { background: #4a2526; }
    .alert::after { background: #f59a9a; }
    .active { background: #323232; }
    .active::after { left: 12px; width: 16px; background: #9cc3e8; }
    .badge { position: absolute; right: 3px; top: 3px; width: 16px; height: 16px; border-radius: 50%; background: #9cc6ee; color: #1c1c1c; font-size: 10px; line-height: 16px; text-align: center; }
    .search { display: flex; align-items: center; justify-content: center; gap: 5px; width: 100px; height: 32px; margin: 0 5px 0 2px; border-radius: 16px; background: #323232; font-size: 12px; }
    .tray { display: flex; align-items: center; gap: 6px; margin-left: auto; font-size: 11px; line-height: 16px; text-align: center; white-space: nowrap; }
    .tray .lang { width: 40px; margin: 0 3px 0 5px; }
    .tray .time { text-align: right; width: 60px; }
    .tray .mic { margin-left: 6px; color: #c9dbe6; }
  `];

  private clock(sec: number) {
    const two = (n: number) => String(n).padStart(2, "0");
    return `${Math.floor(sec / 3600)}:${two(Math.floor(sec / 60) % 60)}:${two(sec % 60)}`;
  }

  private pin(name: string, extra = "", badge = "") {
    return html`<button class="pin ${extra}" aria-label=${name}>${app(name)}${badge ? html`<span class="badge">${badge}</span>` : ""}</button>`;
  }

  private skip(n: number, d: string) {
    return html`<button class="ctl" aria-label="Skip ${n} seconds">${icon(20, 22, "0 0 20 22", svg`<path d=${d} stroke="#fff" stroke-width="1.200" stroke-linecap="round"/><text x="10" y="18" text-anchor="middle" font-family="Noto Sans" font-weight="500" font-size="10" fill="#fff">${n}</text>`)}</button>`;
  }

  render() {
    const at = (this.elapsed / this.total) * 100;
    return html`
      <main class="player">
        <deck-editor></deck-editor>
        <header class="top">
          <button class="back" aria-label="Back">${line("M13 7H1.500M6.500 2l-5 5 5 5", 14, 14, 1.2)}</button>
          <span class="brand">${icon(20, 20, "0 0 24 24", apps.media)}</span>
          <span>Media Player</span>
          <span class="caps">
            <button aria-label="Minimize">${line("M2 7h10", 14, 14, 1.2)}</button>
            <button aria-label="Restore">${icon(14, 14, "0 0 14 14", svg`<rect x="2" y="4.500" width="7.500" height="7.500" rx="1" stroke="#fff" stroke-width="1.200"/><path d="M4.500 2.200H10a2 2 0 0 1 2 2V9.500" stroke="#fff" stroke-width="1.200"/>`)}</button>
            <button aria-label="Close">${line("M2.500 2.500l9 9M11.500 2.500l-9 9", 14, 14, 1.1)}</button>
          </span>
        </header>
        <section class="panel">
          <div class="seekrow">
            <span class="stamp">${this.clock(this.elapsed)}</span>
            <input class="seek" type="range" aria-label="Seek" min="0" max=${this.total} .value=${String(this.elapsed)} style="--at:${at}%"
              @input=${(e: Event) => (this.elapsed = Number((e.target as HTMLInputElement).value))} />
            <span class="stamp">${this.clock(this.total - this.elapsed)}</span>
          </div>
          <div class="controls">
            <h1 class="name">day-1</h1>
            <div class="mid">
              <button class="ctl" aria-label="Shuffle off">${line("M1 13.500c6 0 9-9 16-9M14.500 2L17 4.500 14.500 7M1 4.500c2 0 3.500.8 5 2.200M11 11.500c1.500 1.500 3.500 2 6 2M14.500 11L17 13.500 14.500 16M2 1.500l14.500 15", 18, 18, 1.1)}</button>
              <button class="ctl" aria-label="Previous">${icon(16, 16, "0 0 16 16", svg`<path d="M2 1v14" stroke="#fff" stroke-width="1.200"/><path d="M14.500 1.300v13.400q0 1-1 .4L5.500 8.700q-.7-.7 0-1.400L13.500.9q1-.6 1 .4z" fill="#fff"/>`)}</button>
              ${this.skip(10, "M3.500 3v4h4M3.500 7C6.500 3 13.500 3 17 7.500")}
              <button class="ctl play" aria-label="Pause">${icon(50, 50, "0 0 50 50", svg`<defs><linearGradient id="ring" x1="0" y1=".25" x2="1" y2=".75"><stop offset=".1" stop-color="#e8822e"/><stop offset=".5" stop-color="#c44f80"/><stop offset="1" stop-color="#75308f"/></linearGradient></defs><circle cx="25" cy="25" r="23" stroke="url(#ring)" stroke-width="3.500"/><rect x="15" y="15.500" width="7.500" height="19" rx="2" fill="#fff"/><rect x="27.500" y="15.500" width="7.500" height="19" rx="2" fill="#fff"/>`)}</button>
              ${this.skip(30, "M16.500 3v4h-4M16.500 7C13.500 3 6.500 3 3 7.500")}
              <button class="ctl off" aria-label="Next">${icon(16, 16, "0 0 16 16", svg`<path d="M14 1v14" stroke="currentColor" stroke-width="1.200"/><path d="M1.500 1.300v13.400q0 1 1 .4l8-6.400q.7-.7 0-1.400L2.500.9q-1-.6-1 .4z" fill="currentColor"/>`)}</button>
              <button class="ctl" aria-label="Repeat off">${line("M4.500 14.500C2 13.500 1 11.500 1 9.500c0-3 2-5 5-5h8M11.500 1.500L14.500 4.500l-3 2.500M14.500 5.500C16 6.500 17 8 17 9.500c0 3-2 5-5 5H7.500M10 11.500l-3 3 3 2.500M1.500 1.500l15 15", 18, 18, 1.1)}</button>
            </div>
            <div class="side">
              <button class="ctl" aria-label="Subtitles">${line("M3 2h10a2 2 0 0 1 2 2v7a2 2 0 0 1-2 2H3a2 2 0 0 1-2-2V4a2 2 0 0 1 2-2zM3.500 8.500h3M8.500 8.500h4M3.500 10.500h5M10.500 10.500h2", 16, 15, 1.1)}</button>
              <button class="ctl" aria-label="Volume">${speaker(false)}</button>
              <button class="ctl" aria-label="Full screen">${line("M1.500 14.500l13-13M9 1.500h5.500V7M1.500 9v5.500H7", 16, 16, 1.2)}</button>
              <button class="ctl" aria-label="Mini player">${line("M2 6V3.500A1.500 1.500 0 0 1 3.500 2h9A1.500 1.500 0 0 1 14 3.500v9a1.500 1.500 0 0 1-1.500 1.500H9.500M14 8H9V2M1.500 14.500L7 9M3 9h4v4", 16, 16, 1.2)}</button>
              <button class="ctl" aria-label="More">${icon(14, 4, "0 0 14 4", svg`<circle cx="2" cy="2" r="1.500" fill="#fff"/><circle cx="7" cy="2" r="1.500" fill="#fff"/><circle cx="12" cy="2" r="1.500" fill="#fff"/>`)}</button>
            </div>
          </div>
        </section>
      </main>
      <footer class="taskbar">
        ${this.pin("windows")}
        <button class="search">${icon(16, 16, "0 0 16 16", svg`<circle cx="9.500" cy="6.500" r="4.800" stroke="#fff" stroke-width="1.500"/><path d="M6 10.300L2 14.500" stroke="#fff" stroke-width="1.800" stroke-linecap="round"/>`)}Search</button>
        ${this.pin("folder", "run")}${this.pin("clock")}${this.pin("vscode")}${this.pin("postman")}${this.pin("infinity")}
        ${this.pin("whatsapp", "", "3")}${this.pin("firefox", "run")}${this.pin("outlook", "run")}${this.pin("edge")}${this.pin("spring")}
        ${this.pin("docker", "run alert")}${this.pin("media", "run active")}${this.pin("terminal", "run")}${this.pin("spring", "run")}
        ${this.pin("intellij", "run")}${this.pin("zoom", "run")}${this.pin("paint", "run")}
        <div class="tray">
          ${chevronUp()}
          ${icon(18, 18, "0 0 16 16", svg`<path fill="#1490df" d="M3.500 13.500a3.500 3.500 0 0 1-.3-7A5 5 0 0 1 12.500 6a3.800 3.800 0 0 1 .3 7.500z"/><path fill="#50b8f5" d="M1 11.500l8-3.500 6 3.800a3 3 0 0 1-2.500 1.700h-9A3 3 0 0 1 1 11.500z"/>`)}
          ${icon(18, 18, "0 0 16 16", svg`<path fill="#c9c9c9" d="M3.500 11.500a3 3 0 0 1-.3-6A4.500 4.500 0 0 1 11.500 5a3 3 0 0 1 1 6z"/><circle cx="11" cy="11" r="4.500" fill="#d9263a"/><path d="M9.300 9.300l3.400 3.400M12.700 9.300l-3.400 3.400" stroke="#fff" stroke-width="1.200"/>`)}
          ${icon(18, 18, "0 0 17 17", svg`<path d="M1.500 7C3 1.500 11 .5 14.500 5M14.500 1.500V5H11M2 15.500V12h3.500M2 12c1.500 2.500 3.500 3.500 6 3.500" stroke="#fff" stroke-width="1.200"/><circle cx="12.500" cy="12" r="4" fill="#1b84dd"/>`)}
          <span class="mic">${mic()}</span>
          <span class="lang">ENG<br />IN</span>${wifi()}${speaker(true)}${battery()}
          <span class="time">12:05 PM<br />6/8/2023</span>${moon()}
        </div>
      </footer>`;
  }
}
